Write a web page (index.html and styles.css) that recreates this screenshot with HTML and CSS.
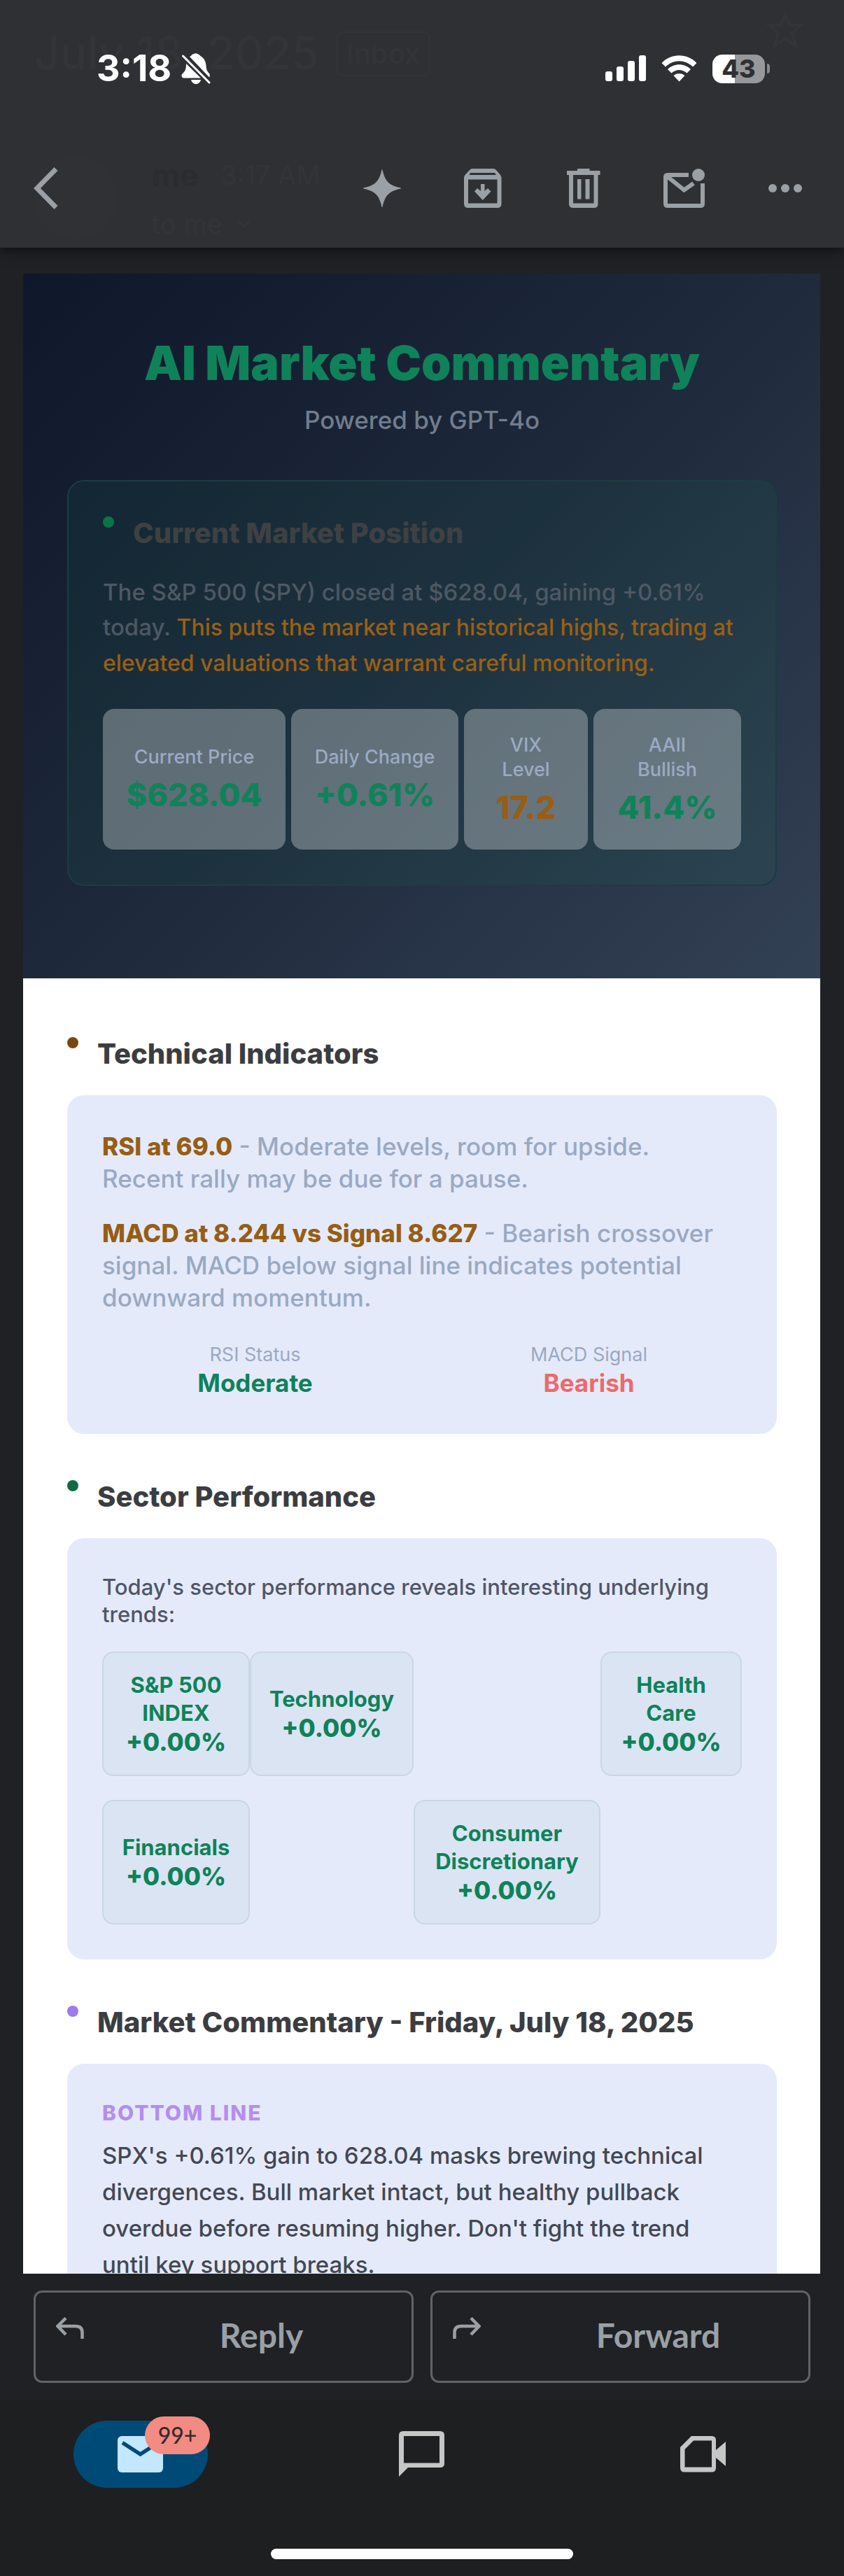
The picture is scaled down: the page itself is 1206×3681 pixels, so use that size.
FILE: index.html
```html
<!DOCTYPE html>
<html lang="en">
<head>
<meta charset="utf-8">
<meta name="viewport" content="width=device-width, initial-scale=1">
<title>AI Market Commentary</title>
<link rel="stylesheet" href="styles.css">
</head>
<body>
<div class="app">
  <header class="topbar">
    <div class="ghost" aria-hidden="true">
      <span class="ghost-subject">July 18, 2025</span>
      <span class="ghost-label">Inbox</span>
      <svg class="ghost-star" width="58" height="56" viewBox="0 0 58 56"><path d="M29 5 35 21H52L39 32 44 50 29 40 14 50 19 32 6 21H23Z" fill="none" stroke="currentColor" stroke-width="4"/></svg>
      <span class="ghost-avatar"></span>
      <span class="ghost-from">me</span>
      <span class="ghost-time">3:17 AM</span>
      <span class="ghost-to">to me</span>
      <svg class="ghost-chevron" width="20" height="12" viewBox="0 0 20 12"><path d="M1 1 10 10 19 1" fill="none" stroke="currentColor" stroke-width="3"/></svg>
    </div>
    <div class="status">
      <div class="status-left">
        <span class="clock">3:18</span>
        <svg class="bell" width="42" height="44" viewBox="0 0 42 44" fill="#fff">
          <path d="M12 5C14 4 14.500 3 16 1.800 19 -.3 22 -.3 25 1.800 26.500 3 27 4 29 5 33 8 35 12 35.500 18 36 24 37 26 40 29 41 30 41 33 40 34.500Z"/>
          <path d="M7 15 28 35.500H4C0 35.500-.5 31 2 29 5 26 7 24 7 15Z"/>
          <path d="M14 38H28C27 42 24 44 21 44S15 42 14 38Z"/>
          <path d="M2.500 4 40 42" stroke="#fff" stroke-width="3" stroke-linecap="round"/>
        </svg>
      </div>
      <div class="status-right">
        <svg width="58" height="38" viewBox="0 0 58 38" fill="#fff"><rect y="23" width="10" height="14" rx="3"/><rect x="16" y="16" width="10" height="21" rx="3"/><rect x="32" y="8" width="10" height="29" rx="3"/><rect x="48" width="10" height="37" rx="3"/></svg>
        <svg width="51" height="38" viewBox="0 0 51 38" fill="#fff"><path d="M.5 11C14-3.500 37-3.500 50.500 11L45 16.500C34 5.500 17 5.500 6 16.500Z"/><path d="M9 20C18 11 33 11 42 20L36.500 25.500C30 19.500 21 19.500 14.500 25.500Z"/><path d="M17.500 29C22 25 29 25 33.500 29L25.500 37.500Z"/></svg>
        <div class="battery"><span class="battery-body">43</span><span class="battery-nub"></span></div>
      </div>
    </div>
    <div class="toolbar">
      <button class="back" aria-label="Back"><svg width="36" height="60" viewBox="0 0 36 60"><path d="M32 2.500 5 30 32 57.500" fill="none" stroke="currentColor" stroke-width="7"/></svg></button>
      <div class="tools">
        <button aria-label="Summarize"><svg width="54" height="54" viewBox="0 0 54 54" fill="currentColor"><path d="M27 0C28 1 28 3 28.500 4.500 32 17 37 22 49.500 25.500 51 26 54 26 54 27S51 28 49.500 28.500C37 32 32 37 28.500 49.500 28 51 28 54 27 54S26 51 25.500 49.500C22 37 17 32 4.500 28.500 3 28 0 28 0 27S3 26 4.500 25.500C17 22 22 17 25.500 4.500 26 3 26 1 27 0Z"/></svg></button>
        <button aria-label="Archive"><svg width="54" height="56" viewBox="0 0 54 56" fill="currentColor"><path fill-rule="evenodd" d="M8 2Q9.500 0 12 0H42Q44.500 0 46 2L52 9Q53.500 11 53.500 13V50Q53.500 56 48 56H6Q0 56 0 50V13Q0 11 1.500 9ZM9 6 7.500 9H46L44 6ZM6 15.500V49.500H47.500V15.500Z"/><path d="M24 22H29.500V32L34 28 38.500 32.500 26.800 45 15 32.500 19 28 24 32Z"/></svg></button>
        <button aria-label="Delete"><svg width="48" height="56" viewBox="0 0 48 56" fill="currentColor"><path fill-rule="evenodd" d="M15 0H32.500V3H47.500V9H44.500V50Q44.500 56 39 56H9Q3 56 3 50V9H0V3H15ZM9 9V49.500H38.500V9Z"/><path d="M15 15H20.500V43.500H15ZM26.500 15H32.500V43.500H26.500Z"/></svg></button>
        <button aria-label="Mark as unread"><svg width="60" height="62" viewBox="0 -3 60 62" fill="none" stroke="currentColor" stroke-width="6"><path d="M36 9H6Q3 9 3 12V50Q3 53 6 53H53Q56 53 56 50V21"/><path d="M4 10 29.500 30.500 43 21"/><circle cx="50" cy="9" r="9" fill="currentColor" stroke="none"/></svg></button>
        <button aria-label="More"><svg width="48" height="12" viewBox="0 0 48 12" fill="currentColor"><circle cx="6" cy="6" r="6"/><circle cx="24" cy="6" r="6"/><circle cx="42" cy="6" r="6"/></svg></button>
      </div>
    </div>
  </header>

  <main class="message">
    <article class="mail">
      <section class="hero">
        <h1>AI Market Commentary</h1>
        <p class="tagline">Powered by GPT-4o</p>
        <div class="position">
          <h2 class="heading heading-dark"><span class="dot dot-green"></span>Current Market Position</h2>
          <p class="position-text">The S&amp;P 500 (SPY) closed at $628.04, gaining +0.61% today. <em>This puts the market near historical highs, trading at elevated valuations that warrant careful monitoring.</em></p>
          <div class="metrics">
            <div class="metric"><span class="metric-label">Current Price</span><span class="metric-value">$628.04</span></div>
            <div class="metric"><span class="metric-label">Daily Change</span><span class="metric-value">+0.61%</span></div>
            <div class="metric"><span class="metric-label">VIX<br>Level</span><span class="metric-value amber">17.2</span></div>
            <div class="metric"><span class="metric-label">AAII<br>Bullish</span><span class="metric-value">41.4%</span></div>
          </div>
        </div>
      </section>

      <div class="sections">
        <section>
          <h2 class="heading"><span class="dot dot-brown"></span>Technical Indicators</h2>
          <div class="card technical">
            <p><strong>RSI at 69.0</strong> - Moderate levels, room for upside. Recent rally may be due for a pause.</p>
            <p><strong>MACD at 8.244 vs Signal 8.627</strong> - Bearish crossover signal. MACD below signal line indicates potential downward momentum.</p>
            <div class="signals">
              <div class="signal"><span class="signal-label">RSI Status</span><span class="signal-value">Moderate</span></div>
              <div class="signal"><span class="signal-label">MACD Signal</span><span class="signal-value bearish">Bearish</span></div>
            </div>
          </div>
        </section>

        <section>
          <h2 class="heading"><span class="dot dot-forest"></span>Sector Performance</h2>
          <div class="card">
            <p class="sector-text">Today's sector performance reveals interesting underlying trends:</p>
            <div class="sectors">
              <div class="sector">S&amp;P 500<br>INDEX<b>+0.00%</b></div>
              <div class="sector">Technology<b>+0.00%</b></div>
              <div class="sector sector-last">Health<br>Care<b>+0.00%</b></div>
              <div class="sector">Financials<b>+0.00%</b></div>
              <div class="sector sector-third">Consumer<br>Discretionary<b>+0.00%</b></div>
            </div>
          </div>
        </section>

        <section>
          <h2 class="heading"><span class="dot dot-violet"></span>Market Commentary - Friday, July 18, 2025</h2>
          <div class="card">
            <h3 class="bottom-line">BOTTOM LINE</h3>
            <p class="commentary">SPX's +0.61% gain to 628.04 masks brewing technical divergences. Bull market intact, but healthy pullback overdue before resuming higher. Don't fight the trend until key support breaks.</p>
          </div>
        </section>
      </div>
    </article>
  </main>

  <div class="actions">
    <button class="action"><svg width="40" height="32" viewBox="0 0 40 32"><path d="M14 1.500 2.500 13 14 25M3 13H28Q37.500 13 37.500 22V31" fill="none" stroke="currentColor" stroke-width="4.500"/></svg><span>Reply</span></button>
    <button class="action"><svg width="40" height="32" viewBox="0 0 40 32"><path d="M26 1.500 37.500 13 26 25M37 13H12Q2.500 13 2.500 22V31" fill="none" stroke="currentColor" stroke-width="4.500"/></svg><span>Forward</span></button>
  </div>

  <footer class="bottom">
    <nav class="tabs">
      <a class="tab" href="#mail" aria-label="Mail"><span class="pill"><svg width="66" height="52" viewBox="0 0 66 52"><rect width="65" height="52" rx="6" fill="#c2e7ff"/><path d="M7 9.500 32.500 26 58 9.500" fill="none" stroke="#004a77" stroke-width="5.500"/></svg><span class="badge">99+</span></span></a>
      <a class="tab" href="#chat" aria-label="Chat"><span class="pill-plain"><svg width="66" height="66" viewBox="0 0 66 66" fill="currentColor"><path fill-rule="evenodd" d="M6 0H59Q65 0 65 6V46Q65 52 59 52H13L0 65V6Q0 0 6 0ZM7 7V45.500H58V7Z"/></svg></span></a>
      <a class="tab" href="#meet" aria-label="Meet"><span class="pill-plain"><svg width="66" height="52" viewBox="0 0 66 52" fill="currentColor"><path fill-rule="evenodd" d="M16 0H45Q51 0 51 6V20L65 8V43L51 31V45.500Q51 51.500 45 51.500H6Q0 51.500 0 45.500V16ZM19 6.500 6.500 19V44.500H45V6.500Z"/></svg></span></a>
    </nav>
    <div class="home-indicator"></div>
  </footer>
</div>
</body>
</html>
```

FILE: styles.css
```css
* { box-sizing: border-box; }

body {
  margin: 0;
  background: #202124;
  font-family: Inter, "Liberation Sans", sans-serif;
}

h1, h2, h3, p { margin: 0; }
button { margin: 0; padding: 0; border: 0; background: none; font: inherit; color: inherit; }
svg { display: block; }

.app { display: flex; flex-direction: column; height: 100vh; }

/* Top bar */
.topbar {
  position: relative;
  z-index: 1;
  flex: none;
  padding-bottom: 12px;
  background: #2f3033;
  box-shadow: 0 3px 16px rgba(0, 0, 0, .6);
}
.ghost { position: absolute; inset: 0; overflow: hidden; color: #333438; }
.ghost > * { position: absolute; }
.ghost-subject { left: 49px; top: 36px; font-size: 64px; line-height: 80px; font-weight: 500; }
.ghost-label { left: 481px; top: 45px; padding: 0 12px; border: 2px solid; border-radius: 8px; font-size: 40px; line-height: 60px; font-weight: 500; }
.ghost-star { right: 55px; top: 15px; }
.ghost-avatar { left: 49px; top: 222px; width: 118px; height: 120px; border-radius: 50%; background: #303135; }
.ghost-from { left: 217px; top: 226px; font-size: 44px; line-height: 48px; font-weight: 700; color: #2b2c2f; }
.ghost-time { left: 315px; top: 226px; font-size: 38px; line-height: 48px; }
.ghost-to { left: 217px; top: 296px; font-size: 38px; line-height: 48px; }
.ghost-chevron { left: 338px; top: 314px; }

.status {
  position: relative;
  display: flex;
  align-items: center;
  justify-content: space-between;
  height: 196px;
  padding: 0 106px 0 138px;
  color: #fff;
}
.status-left { display: flex; align-items: center; gap: 14px; }
.status-right { display: flex; align-items: center; gap: 22px; }
.clock { font-size: 52px; line-height: 64px; font-weight: 700; }
.battery { display: flex; align-items: center; gap: 3px; }
.battery-body {
  width: 75px;
  border-radius: 14px;
  background: linear-gradient(90deg, #fff 43%, #97989a 43%);
  color: #2f3033;
  font-size: 36px;
  line-height: 41px;
  font-weight: 800;
  text-align: center;
}
.battery-nub { width: 4px; height: 14px; border-radius: 0 4px 4px 0; background: #8a8b8d; }

.toolbar {
  position: relative;
  display: flex;
  align-items: center;
  justify-content: space-between;
  height: 146px;
  padding: 0 12px 0 48px;
  color: #9aa0a6;
}
.tools { display: flex; }
.tools button { display: flex; align-items: center; justify-content: center; width: 144px; height: 96px; }

/* Message */
.message { flex: 1; min-height: 0; overflow: hidden; padding: 37px 34px 0 33px; }
.mail { background: #fff; }

.hero {
  padding: 85px 62px 132px 63px;
  background: linear-gradient(135deg, #0f172a 0%, #1e293b 50%, #334155 100%);
}
h1 { font-size: 68px; line-height: 84px; font-weight: 900; text-align: center; color: #0f8259; }
.tagline { margin: 16px 0 62px; font-size: 35px; line-height: 48px; font-weight: 500; text-align: center; color: #717d8f; }

.position {
  padding: 50px 49px;
  border: 2px solid #1b3d41;
  border-radius: 24px;
  background: rgba(16, 128, 88, .1);
}
.heading { display: flex; gap: 27px; font-size: 40px; line-height: 48px; font-weight: 800; color: #3b3d40; }
.heading-dark { margin-bottom: 35px; color: #3e4144; }
.dot { flex: none; width: 16px; height: 16px; border-radius: 50%; }
.dot-green { background: #0c7546; }
.dot-brown { background: #7b4610; }
.dot-forest { background: #0f6b44; }
.dot-violet { background: #9f79ee; }

.position-text { font-size: 33px; line-height: 50px; font-weight: 500; color: #4e5864; }
.position-text em { font-size: 32px; font-style: normal; color: #9a6014; }

.metrics { display: grid; grid-template-columns: 261fr 239fr 177fr 211fr; gap: 8px; margin-top: 40px; }
.metric {
  display: flex;
  flex-direction: column;
  justify-content: center;
  gap: 10px;
  min-height: 201px;
  border-radius: 16px;
  background: rgba(255, 255, 255, .3);
  text-align: center;
}
.metric-label { font-size: 27px; line-height: 35px; font-weight: 500; color: #9caac4; }
.metric-value { font-size: 45px; line-height: 54px; font-weight: 800; color: #0f8259; }
.metric-value.amber { color: #9a5d11; }

.sections { display: flex; flex-direction: column; gap: 66px; padding: 84px 62px 63px 63px; }
.card { margin-top: 35px; padding: 50px; border-radius: 24px; background: #e5eafb; }

.technical { font-size: 35px; line-height: 46px; font-weight: 500; color: #9aa9c1; }
.technical p { padding-right: 16px; }
.technical p + p { margin-top: 32px; }
.technical strong { font-weight: 800; color: #965e14; }
.signals { display: grid; grid-template-columns: 1fr 1fr; gap: 40px; margin-top: 42px; }
.signal { display: flex; flex-direction: column; text-align: center; }
.signal-label { font-size: 27px; line-height: 34px; font-weight: 400; }
.signal-value { font-weight: 700; color: #0f8259; }
.signal-value.bearish { color: #ec6a6a; }

.sector-text { font-size: 31px; line-height: 39px; font-weight: 500; color: #505666; }
.sectors { display: grid; grid-template-columns: 211fr 234fr 267fr 202fr; gap: 34px 0; margin-top: 34px; }
.sector {
  display: flex;
  flex-direction: column;
  justify-content: center;
  min-height: 178px;
  border: 2px solid #c9d7e4;
  border-radius: 16px;
  background: #dae4f3;
  font-size: 31px;
  line-height: 40px;
  font-weight: 700;
  text-align: center;
  color: #0f8259;
}
.sector b { font-size: 35px; line-height: 42px; font-weight: 800; }
.sector-last { grid-column: 4; }
.sector-third { grid-column: 3; }

.bottom-line { margin-bottom: 15px; font-size: 30px; line-height: 40px; font-weight: 800; letter-spacing: 2px; color: #b48eee; }
.commentary { font-size: 33px; line-height: 52px; font-weight: 500; color: #434852; }

/* Reply / forward */
.actions { flex: none; display: grid; grid-template-columns: 1fr 1fr; gap: 24px; padding: 24px 48px; }
.action {
  display: flex;
  gap: 68px;
  height: 132px;
  padding: 35px 29px 0;
  border: 3px solid #5f6368;
  border-radius: 12px;
  color: #9aa0a6;
  font-family: Lato, sans-serif;
  font-size: 48px;
  line-height: 52px;
  font-weight: 700;
}
.action span { flex: 1; text-align: center; }

/* Bottom navigation */
.bottom { flex: none; display: flex; flex-direction: column; align-items: center; padding-bottom: 24px; background: #1e1f20; }
.tabs { align-self: stretch; display: grid; grid-template-columns: repeat(3, 1fr); padding: 30px 0 87px; }
.tab { display: flex; justify-content: center; color: #c4c7c5; text-decoration: none; }
.pill, .pill-plain { position: relative; display: flex; align-items: center; justify-content: center; width: 192px; height: 96px; border-radius: 48px; }
.pill { background: #004a77; }
.badge {
  position: absolute;
  top: -6px;
  right: -3px;
  width: 93px;
  border-radius: 27px;
  background: #f28b82;
  color: #37292a;
  font-family: Lato, sans-serif;
  font-size: 32px;
  line-height: 54px;
  font-weight: 500;
  text-align: center;
}
.home-indicator { width: 432px; height: 15px; border-radius: 8px; background: #fff; }
```
